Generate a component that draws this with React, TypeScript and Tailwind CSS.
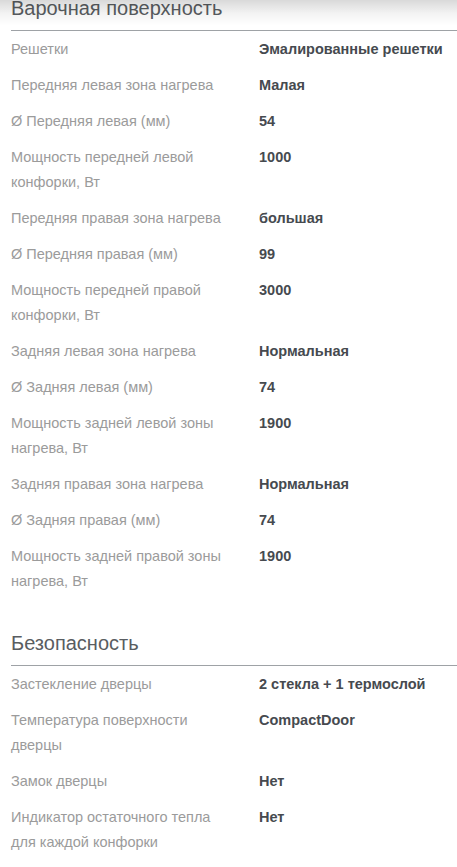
interface Spec {
  label: string;
  value: string;
}

interface Section {
  title: string;
  specs: Spec[];
}

const sections: Section[] = [
  {
    title: 'Варочная поверхность',
    specs: [
      { label: 'Решетки', value: 'Эмалированные решетки' },
      { label: 'Передняя левая зона нагрева', value: 'Малая' },
      { label: 'Ø Передняя левая (мм)', value: '54' },
      { label: 'Мощность передней левой конфорки, Вт', value: '1000' },
      { label: 'Передняя правая зона нагрева', value: 'большая' },
      { label: 'Ø Передняя правая (мм)', value: '99' },
      { label: 'Мощность передней правой конфорки, Вт', value: '3000' },
      { label: 'Задняя левая зона нагрева', value: 'Нормальная' },
      { label: 'Ø Задняя левая (мм)', value: '74' },
      { label: 'Мощность задней левой зоны нагрева, Вт', value: '1900' },
      { label: 'Задняя правая зона нагрева', value: 'Нормальная' },
      { label: 'Ø Задняя правая (мм)', value: '74' },
      { label: 'Мощность задней правой зоны нагрева, Вт', value: '1900' },
    ],
  },
  {
    title: 'Безопасность',
    specs: [
      { label: 'Застекление дверцы', value: '2 стекла + 1 термослой' },
      { label: 'Температура поверхности дверцы', value: 'CompactDoor' },
      { label: 'Замок дверцы', value: 'Нет' },
      { label: 'Индикатор остаточного тепла для каждой конфорки', value: 'Нет' },
    ],
  },
];

export default function App() {
  return (
    <div className="relative h-[867px] overflow-hidden bg-white font-['Liberation_Sans',Arial,sans-serif]">
      {/* shadow from the sticky header above */}
      <div className="pointer-events-none absolute inset-x-0 top-0 z-10 h-[26px] bg-gradient-to-b from-black/15 via-black/5 to-transparent" />

      <div className="-mt-[6px] pl-[11px]">
        {sections.map((section, i) => (
          <section key={section.title} className={i > 0 ? 'mt-[30px]' : ''}>
            <h2 className="border-b border-[#9ea2a6] pb-[8px] text-[20px] leading-[28px] font-normal text-[#595d61]">
              {section.title}
            </h2>
            <div>
              {section.specs.map((spec) => (
                <div key={spec.label} className="grid grid-cols-[248px_1fr] py-[5.5px] text-[14.5px] leading-[25px]">
                  <div className="pr-[28px] text-[#9b9b9b]">{spec.label}</div>
                  <div className="font-bold text-[#464a4f]">{spec.value}</div>
                </div>
              ))}
            </div>
          </section>
        ))}
      </div>
    </div>
  );
}
